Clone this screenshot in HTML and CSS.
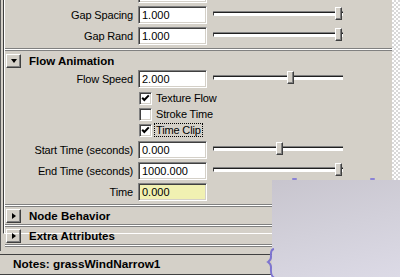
FILE: index.html
```html
<!DOCTYPE html>
<html>

<head>
    <title>Attribute Editor - grassWindNarrow1</title>
    <link rel="stylesheet" href="styles.css">
</head>

<body>
    <div class="screen">
        <div class="main">
            <div class="panel">
                <div class="panel-body">
                    <div class="attrs top">
                        <!-- row scrolled mostly out of view -->
                        <div class="row">
                            <span class="label"></span>
                            <span class="field"></span>
                            <span class="slider"><span class="track"></span><span class="thumb" style="--v: 0"></span></span>
                        </div>
                        <div class="row">
                            <span class="label">Gap Spacing</span>
                            <span class="field">1.000</span>
                            <span class="slider"><span class="track"></span><span class="thumb" style="--v: 1"></span></span>
                        </div>
                        <div class="row">
                            <span class="label">Gap Rand</span>
                            <span class="field">1.000</span>
                            <span class="slider"><span class="track"></span><span class="thumb" style="--v: 1"></span></span>
                        </div>
                    </div>

                    <div class="frame open">
                        <div class="frame-head">
                            <span class="toggle"><span class="arrow down"></span></span>
                            <span class="title">Flow Animation</span>
                        </div>
                        <div class="attrs">
                            <div class="row">
                                <span class="label">Flow Speed</span>
                                <span class="field">2.000</span>
                                <span class="slider"><span class="track"></span><span class="thumb" style="--v: 0.61"></span></span>
                            </div>
                            <div class="checks">
                                <div class="check">
                                    <span class="box">
                                        <svg width="9" height="9" viewBox="0 0 9 9"><polyline points="1.2,3.8 3.3,6 7.8,1.4" fill="none" stroke="#000" stroke-width="2"/></svg>
                                    </span>
                                    <span class="check-label">Texture Flow</span>
                                </div>
                                <div class="check">
                                    <span class="box"></span>
                                    <span class="check-label">Stroke Time</span>
                                </div>
                                <div class="check">
                                    <span class="box">
                                        <svg width="9" height="9" viewBox="0 0 9 9"><polyline points="1.2,3.8 3.3,6 7.8,1.4" fill="none" stroke="#000" stroke-width="2"/></svg>
                                    </span>
                                    <span class="check-label focus">Time Clip</span>
                                </div>
                            </div>
                            <div class="row">
                                <span class="label">Start Time (seconds)</span>
                                <span class="field">0.000</span>
                                <span class="slider"><span class="track"></span><span class="thumb" style="--v: 0.52"></span></span>
                            </div>
                            <div class="row">
                                <span class="label">End Time (seconds)</span>
                                <span class="field">1000.000</span>
                                <span class="slider"><span class="track"></span><span class="thumb" style="--v: 1"></span></span>
                            </div>
                            <div class="row">
                                <span class="label">Time</span>
                                <span class="field locked">0.000</span>
                            </div>
                        </div>
                    </div>

                    <div class="frame">
                        <div class="frame-head">
                            <span class="toggle"><span class="arrow right"></span></span>
                            <span class="title">Node Behavior</span>
                        </div>
                    </div>

                    <div class="frame">
                        <div class="frame-head">
                            <span class="toggle"><span class="arrow right"></span></span>
                            <span class="title">Extra Attributes</span>
                        </div>
                    </div>

                    <div class="panel-end"></div>
                </div>
            </div>

            <div class="notes">Notes: grassWindNarrow1</div>
            <div class="notes-text"></div>
        </div>
        <div class="checker"></div>

        <!-- pasted image lying over the editor -->
        <div class="overlay"></div>
        <span class="blip blip-a"></span>
        <span class="blip blip-b"></span>
        <svg class="brace" width="10" height="30" viewBox="0 0 10 30">
            <path d="M8 1 C4 1.5 5 6 5 9 C5 12 3.5 13 2 14 C3.5 15 5 16 5 19 C5 23 4 28 8 29.5" fill="none" stroke="#7d74d0" stroke-width="2"/>
        </svg>
    </div>
</body>

</html>
```

FILE: styles.css
```css
body {
    margin: 0;
    width: 400px;
    height: 277px;
    overflow: hidden;
    font-family: "Liberation Sans", Arial, sans-serif;
    font-size: 11px;
    color: #000;
    background: #d4d0c8;
}

.screen {
    position: relative;
    display: flex;
    height: 277px;
}

.main {
    width: 392px;
    display: flex;
    flex-direction: column;
}

.checker {
    flex: 1;
    background: repeating-conic-gradient(#d9d9d9 0 25%, #fff 0 50%) 0 0 / 4px 4px;
}

/* sunken frame round the attribute list */
.panel {
    height: 251px;
    box-sizing: border-box;
    border-left: 1px solid #5a5a5a;
    padding-left: 2px;
    overflow: hidden;
}

.panel-body {
    height: 100%;
    box-sizing: border-box;
    border-left: 1px solid #404040;
    border-bottom: 1px solid #fff;
    box-shadow: inset 1px 0 #fff;
    padding-left: 1px;
}

.attrs.top {
    margin-top: -17px;
    padding-bottom: 2px;
}

.frame.open .attrs {
    padding-bottom: 2px;
}

.row {
    display: flex;
    align-items: flex-start;
    height: 21px;
    padding-top: 2px;
    box-sizing: border-box;
}

.label {
    width: 128px;
    margin-right: 5px;
    text-align: right;
    line-height: 18px;
    letter-spacing: -0.15px;
    white-space: nowrap;
}

.field {
    width: 69px;
    height: 18px;
    box-sizing: border-box;
    background: #fff;
    border: 1px solid;
    border-color: #808080 #fff #fff #808080;
    box-shadow: inset 1px 1px #404040, inset -1px -1px #d4d0c8;
    padding-left: 3px;
    line-height: 17px;
}

.field.locked {
    background: #f1f1b2;
}

.slider {
    position: relative;
    width: 130px;
    height: 18px;
    margin-left: 6px;
}

.track {
    display: block;
    margin-top: 6px;
    height: 2px;
    background: #fff;
    border-top: 1px solid #202020;
    border-left: 1px solid #404040;
    border-bottom: 1px solid #fff;
    box-shadow: 0 -1px 0 #808080;
}

.thumb {
    position: absolute;
    top: 1px;
    left: calc((100% - 8px) * var(--v));
    width: 7px;
    height: 13px;
    box-sizing: border-box;
    background: #d4d0c8;
    border: 1px solid;
    border-color: #fff #404040 #404040 #fff;
    box-shadow: inset -1px -1px #808080;
}

.checks {
    margin: 1px 0 1px 134px;
}

.check {
    display: flex;
    align-items: flex-start;
    height: 16px;
    padding-top: 2px;
    box-sizing: border-box;
}

.box {
    display: flex;
    align-items: center;
    justify-content: center;
    width: 13px;
    height: 13px;
    box-sizing: border-box;
    background: #fff;
    border: 1px solid;
    border-color: #808080 #fff #fff #808080;
    box-shadow: inset 1px 1px #404040, inset -1px -1px #d4d0c8;
}

.check-label {
    margin-left: 2px;
    margin-top: -1px;
    padding: 0 1px;
    border: 1px dotted transparent;
    line-height: 12px;
    letter-spacing: -0.15px;
}

.check-label.focus {
    border-color: #000;
}

/* collapsible frame headers */
.frame {
    border-top: 1px solid #808080;
}

.frame-head {
    display: flex;
    align-items: flex-start;
    height: 19px;
    box-sizing: border-box;
    border-top: 1px solid #fff;
    box-shadow: inset 0 1px #808080;
    padding: 3px 0 0 1px;
}

.frame.open .frame-head {
    padding-top: 4px;
}

.toggle {
    display: flex;
    align-items: center;
    justify-content: center;
    width: 15px;
    height: 14px;
    box-sizing: border-box;
    border: 1px solid;
    border-color: #fff #404040 #404040 #fff;
    box-shadow: inset -1px -1px #808080;
}

.arrow {
    width: 0;
    height: 0;
}

.arrow.down {
    border-left: 3.5px solid transparent;
    border-right: 3.5px solid transparent;
    border-top: 4px solid #000;
}

.arrow.right {
    border-top: 3.5px solid transparent;
    border-bottom: 3.5px solid transparent;
    border-left: 4px solid #000;
}

.title {
    margin-left: 8px;
    font-weight: bold;
    font-size: 11.5px;
    line-height: 14px;
}

.panel-end {
    height: 1px;
    border-top: 1px solid #808080;
    border-bottom: 1px solid #808080;
    background: #fff;
}

.notes {
    margin-top: 3px;
    border-top: 1px solid #404040;
    height: 20px;
    box-sizing: border-box;
    padding-left: 13px;
    font-weight: bold;
    font-size: 11.8px;
    line-height: 19px;
}

.notes-text {
    flex: 1;
    border-top: 1px solid #404040;
    background: #fff;
}

.overlay {
    position: absolute;
    left: 272px;
    top: 180px;
    right: 0;
    bottom: 0;
    background: linear-gradient(165deg, #c8c5ce 0%, #d2d0da 50%, #dcdae6 100%);
}

.blip {
    position: absolute;
    top: 178px;
    width: 5px;
    height: 2px;
    border-radius: 1px;
    background: #8a82d6;
}

.blip-a {
    left: 292px;
}

.blip-b {
    left: 370px;
}

.brace {
    position: absolute;
    left: 266px;
    top: 248px;
}
```
